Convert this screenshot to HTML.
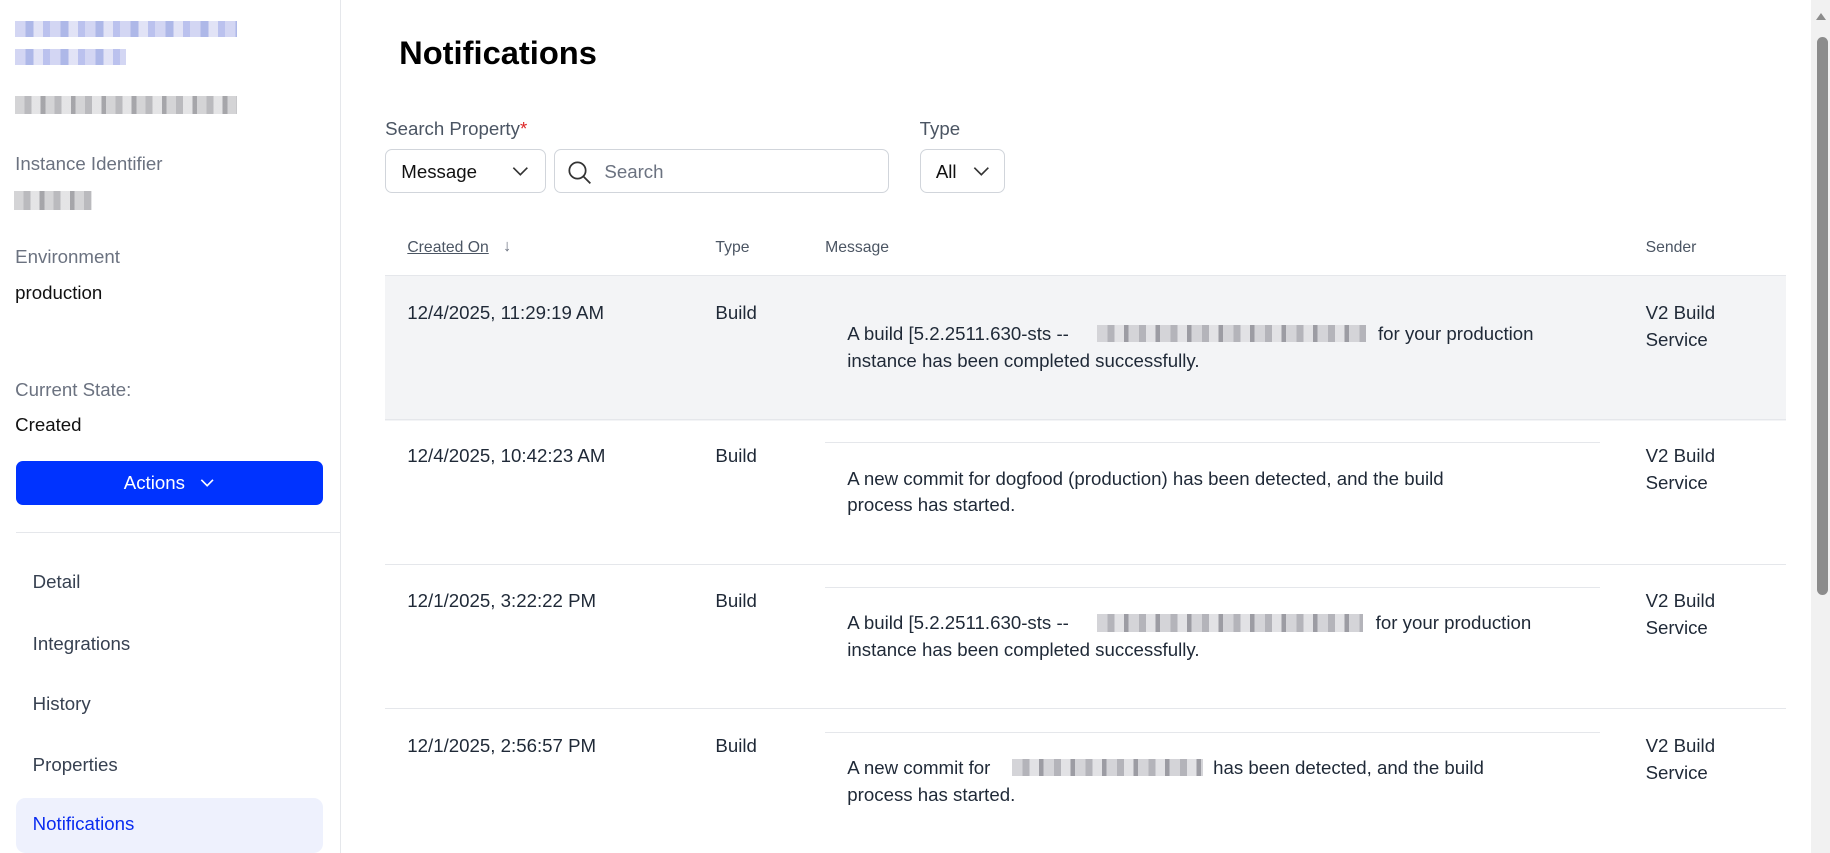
<!DOCTYPE html>
<html><head><meta charset="utf-8"><style>
html,body{margin:0;padding:0;background:#fff;overflow:hidden}
#w{zoom:1.16709;width:1568px;height:731px;position:relative;font-family:"Liberation Sans",sans-serif;color:#1f2937}
.a{position:absolute;white-space:nowrap}
.blur{position:absolute;background:repeating-linear-gradient(90deg,#c9c9cc 0 8px,#a9a9ad 8px 14px,#dedee0 14px 22px,#8f8f94 22px 26px);opacity:.8}
.bb{background:repeating-linear-gradient(90deg,#c8ccf0 0 9px,#9aa6e2 9px 16px,#dadcf4 16px 24px,#aab2ea 24px 30px)}
.lbl{color:#6b7280;font-size:16px}
.nav{position:absolute;left:28px;font-size:16px;color:#374151}
.box{position:absolute;border:1px solid #d1d5db;border-radius:6px;background:#fff;box-sizing:border-box}
.row{position:absolute;left:330px;width:1200px;height:124px;border-top:1px solid #e5e7eb}
.c{position:absolute;font-size:16px;color:#1f2937;line-height:23px}
.ln{position:absolute;left:377px;width:664px;top:19px;border-top:1px solid #e5e7eb}
.blurin{background:repeating-linear-gradient(90deg,#d4d4d8 0 9px,#b4b4ba 9px 15px,#e2e2e5 15px 23px,#9c9ca3 23px 27px)}
</style></head><body><div id="w">
<div class="a" style="left:291px;top:0;width:1px;height:731px;background:#e5e7eb"></div>
<div class="blur bb" style="left:13px;top:18px;width:190px;height:14px"></div>
<div class="blur bb" style="left:13px;top:42px;width:95px;height:14px"></div>
<div class="blur" style="left:13px;top:82px;width:190px;height:16px"></div>
<div class="a lbl" style="left:13px;top:131px">Instance Identifier</div>
<div class="blur" style="left:12px;top:164px;width:67px;height:16px"></div>
<div class="a lbl" style="left:13px;top:211px">Environment</div>
<div class="a" style="left:13px;top:242px;font-size:16px;color:#111">production</div>
<div class="a lbl" style="left:13px;top:325px">Current State:</div>
<div class="a" style="left:13px;top:355px;font-size:16px;color:#111">Created</div>
<div class="a" style="left:14px;top:395px;width:263px;height:38px;background:#0033ff;border-radius:6px;color:#fff;font-size:16px;text-align:center;line-height:38px">Actions <svg width="14" height="14" viewBox="0 0 14 14" style="margin-left:8px;vertical-align:-1px"><path d="M2 5l5 5 5-5" fill="none" stroke="#fff" stroke-width="1.4"/></svg></div>
<div class="a" style="left:14px;top:456px;width:277px;height:1px;background:#e5e7eb"></div>
<div class="nav" style="top:489px">Detail</div>
<div class="nav" style="top:542px">Integrations</div>
<div class="nav" style="top:594px">History</div>
<div class="nav" style="top:646px">Properties</div>
<div class="a" style="left:14px;top:684px;width:263px;height:47px;background:#eef1fd;border-radius:8px"></div>
<div class="nav" style="top:697px;color:#0a2cf0">Notifications</div>

<div class="a" style="left:342px;top:29px;font-size:28px;font-weight:bold;color:#000">Notifications</div>
<div class="a" style="left:330px;top:101px;font-size:16px;color:#4b5563">Search Property<span style="color:#dc2626">*</span></div>
<div class="a" style="left:788px;top:101px;font-size:16px;color:#4b5563">Type</div>
<div class="box" style="left:330px;top:128px;width:138px;height:37px"><span class="a" style="left:13px;top:9px;font-size:16px;color:#111">Message</span><svg class="a" style="left:107px;top:11px" width="16" height="14" viewBox="0 0 16 14"><path d="M2 4l6 6 6-6" fill="none" stroke="#333" stroke-width="1.4"/></svg></div>
<div class="box" style="left:475px;top:128px;width:287px;height:37px"><svg class="a" style="left:10px;top:8px" width="22" height="22" viewBox="0 0 22 22"><circle cx="9" cy="9" r="7" fill="none" stroke="#333" stroke-width="1.5"/><path d="M14 14l6 6" stroke="#333" stroke-width="1.5"/></svg><span class="a" style="left:42px;top:9px;font-size:16px;color:#6b7280">Search</span></div>
<div class="box" style="left:788px;top:128px;width:73px;height:37px"><span class="a" style="left:13px;top:9px;font-size:16px;color:#111">All</span><svg class="a" style="left:44px;top:11px" width="16" height="14" viewBox="0 0 16 14"><path d="M2 4l6 6 6-6" fill="none" stroke="#333" stroke-width="1.4"/></svg></div>

<div class="a" style="left:349px;top:205px;font-size:13.5px;color:#4b5563;text-decoration:underline">Created On </div><div class="a" style="left:431px;top:203px;font-size:14px;color:#6b7280">↓</div>
<div class="a" style="left:613px;top:205px;font-size:13.5px;color:#4b5563">Type</div>
<div class="a" style="left:707px;top:205px;font-size:13.5px;color:#4b5563">Message</div>
<div class="a" style="left:1410px;top:205px;font-size:13.5px;color:#4b5563">Sender</div>

<div class="row" style="top:236px;background:#f3f4f6">
<div class="c" style="left:19px;top:20px">12/4/2025, 11:29:19 AM</div>
<div class="c" style="left:283px;top:20px">Build</div>
<div class="c" style="left:396px;top:38px;white-space:nowrap">A build [5.2.2511.630-sts -- <span style="display:inline-block;width:230px;height:15px;vertical-align:-2px;margin:0 6px 0 20px" class="blurin"></span> for your production<br>instance has been completed successfully.</div>
<div class="c" style="left:1080px;top:20px">V2 Build<br>Service</div>
</div>
<div class="row" style="top:359px">
<div class="ln"></div>
<div class="c" style="left:19px;top:20px">12/4/2025, 10:42:23 AM</div>
<div class="c" style="left:283px;top:20px">Build</div>
<div class="c" style="left:396px;top:39px;white-space:nowrap">A new commit for dogfood (production) has been detected, and the build<br>process has started.</div>
<div class="c" style="left:1080px;top:20px">V2 Build<br>Service</div>
</div>
<div class="row" style="top:483px">
<div class="ln"></div>
<div class="c" style="left:19px;top:20px">12/1/2025, 3:22:22 PM</div>
<div class="c" style="left:283px;top:20px">Build</div>
<div class="c" style="left:396px;top:39px;white-space:nowrap">A build [5.2.2511.630-sts -- <span style="display:inline-block;width:228px;height:15px;vertical-align:-2px;margin:0 6px 0 20px" class="blurin"></span> for your production<br>instance has been completed successfully.</div>
<div class="c" style="left:1080px;top:20px">V2 Build<br>Service</div>
</div>
<div class="row" style="top:607px">
<div class="ln"></div>
<div class="c" style="left:19px;top:20px">12/1/2025, 2:56:57 PM</div>
<div class="c" style="left:283px;top:20px">Build</div>
<div class="c" style="left:396px;top:39px;white-space:nowrap">A new commit for <span style="display:inline-block;width:164px;height:15px;vertical-align:-2px;margin:0 4px 0 14px" class="blurin"></span> has been detected, and the build<br>process has started.</div>
<div class="c" style="left:1080px;top:20px">V2 Build<br>Service</div>
</div>

<div class="a" style="left:1552px;top:0;width:16px;height:731px;background:#f1f1f1"></div>
<div class="a" style="left:1557px;top:32px;width:9px;height:478px;background:#8c8c8c;border-radius:5px"></div>
<div class="a" style="left:1556px;top:11px;width:0;height:0;border-left:5px solid transparent;border-right:5px solid transparent;border-bottom:6px solid #8c8c8c"></div>
</div></body></html>
